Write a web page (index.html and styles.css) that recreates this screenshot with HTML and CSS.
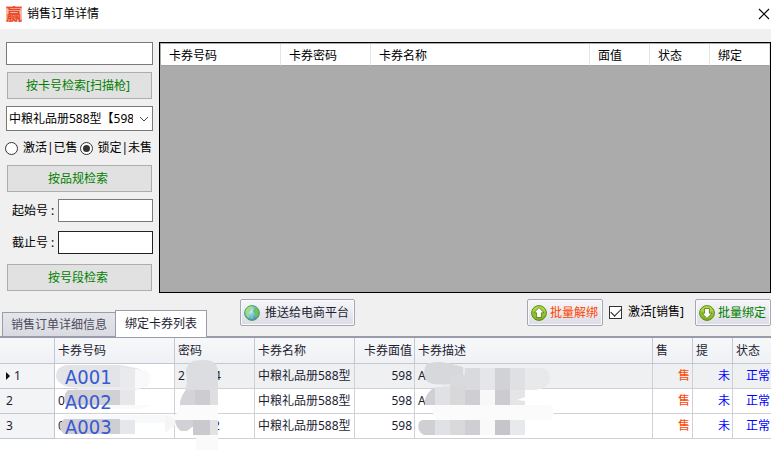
FILE: index.html
```
<!DOCTYPE html>
<html lang="zh-CN">
<head>
  <meta charset="UTF-8" />
  <meta name="viewport" content="width=device-width, initial-scale=1.0"/>
  <title>销售订单详情</title>
  <link rel="stylesheet" href="styles.css">
</head>
<body>
  <header class="title-bar">
    <span class="app-icon">赢</span>
    <h1>销售订单详情</h1>
    <button class="close-btn" aria-label="关闭">
      <svg width="12" height="12" viewBox="0 0 12 12"><path d="M1 1l10 10M11 1L1 11" stroke="#000" stroke-width="1.1"/></svg>
    </button>
  </header>

  <main class="workspace">
    <form class="search" onsubmit="return false">
      <input type="text" class="box" id="cardNo" aria-label="卡号">
      <button class="search-btn">按卡号检索[扫描枪]</button>
      <div class="combo">
        <select class="box" id="spec" aria-label="品规">
          <option>中粮礼品册588型【598</option>
        </select>
        <svg class="arrow" width="10" height="6" viewBox="0 0 10 6"><path d="M1 1l4 4 4-4" fill="none" stroke="#444"/></svg>
      </div>
      <div class="radios">
        <label><input type="radio" name="state"> 激活|已售</label>
        <label><input type="radio" name="state" checked> 锁定|未售</label>
      </div>
      <button class="search-btn">按品规检索</button>
      <div class="range">
        <label for="startNo">起始号 :</label>
        <input type="text" class="box" id="startNo">
        <label for="endNo">截止号 :</label>
        <input type="text" class="box active" id="endNo">
      </div>
      <button class="search-btn">按号段检索</button>
    </form>

    <section class="result">
      <table class="result-grid">
        <colgroup>
          <col class="w120"><col class="w90"><col><col class="w60"><col class="w60"><col class="w60">
        </colgroup>
        <thead>
          <tr><th>卡券号码</th><th>卡券密码</th><th>卡券名称</th><th>面值</th><th>状态</th><th>绑定</th></tr>
        </thead>
      </table>
    </section>
  </main>

  <div class="toolbar">
    <nav class="tabs">
      <button class="tab">销售订单详细信息</button>
      <button class="tab selected">绑定卡券列表</button>
    </nav>
    <button class="tool push">
      <svg width="16" height="16" viewBox="0 0 16 16">
        <defs>
          <radialGradient id="globe" cx=".4" cy=".35" r=".7"><stop offset="0" stop-color="#d3effc"/><stop offset=".6" stop-color="#66b2e2"/><stop offset="1" stop-color="#3a83bd"/></radialGradient>
          <linearGradient id="green" x1="0" y1="0" x2="0" y2="1"><stop offset="0" stop-color="#b8e052"/><stop offset="1" stop-color="#7aae1c"/></linearGradient>
        </defs>
        <circle cx="8" cy="8" r="7.4" fill="url(#globe)" stroke="#55a04c"/>
        <path d="M2 5c1-2 3-3.600 5.500-3.800l1.500 1-2 1.500.5 1.500-2 1.500L4 8l1.500 2-.5 3C2.500 11.500 1 8.500 2 5z" fill="#9be07e"/>
        <path d="M10 3l3 .5c1.500 2 2 4.500 1 7l-2 2-1.500-2 .5-2-2-1.500L9.500 5z" fill="#6cc258"/>
        <path d="M7 11l2 1-1 2-1.500-.5z" fill="#8cd870"/>
      </svg>
      推送给电商平台
    </button>
    <button class="tool unbind">
      <svg width="16" height="16" viewBox="0 0 16 16">
        <circle cx="8" cy="8" r="7.400" fill="url(#green)" stroke="#5c8a10"/>
        <path d="M8 2.500l5 5.300h-2.600V12.500H5.600V7.800H3z" fill="#fff" stroke="#4f7810" stroke-width=".8"/>
      </svg>
      批量解绑
    </button>
    <label class="check"><input type="checkbox" checked> 激活[销售]</label>
    <button class="tool bind">
      <svg width="16" height="16" viewBox="0 0 16 16">
        <circle cx="8" cy="8" r="7.400" fill="url(#green)" stroke="#5c8a10"/>
        <path d="M8 13.500l5-5.300h-2.600V3.500H5.600v4.700H3z" fill="#fff" stroke="#4f7810" stroke-width=".8"/>
      </svg>
      批量绑定
    </button>
  </div>

  <section class="panel">
    <table class="cards">
      <colgroup>
        <col class="w55"><col class="w120"><col class="w80"><col class="w100"><col class="w60"><col><col class="w40"><col class="w40"><col class="w38">
      </colgroup>
      <thead>
        <tr><th></th><th>卡券号码</th><th>密码</th><th>卡券名称</th><th class="num">卡券面值</th><th>卡券描述</th><th>售</th><th>提</th><th>状态</th></tr>
      </thead>
      <tbody>
        <tr class="current">
          <th><span class="pointer"></span>1</th>
          <td class="focused"><span class="mark">A001</span></td>
          <td>2<span class="tail">4</span></td>
          <td>中粮礼品册588型</td><td class="num">598</td><td>A</td>
          <td class="sold">售</td><td class="state">未</td><td class="state">正常</td>
        </tr>
        <tr>
          <th>2</th>
          <td>0<span class="mark">A002</span></td>
          <td></td>
          <td>中粮礼品册588型</td><td class="num">598</td><td>A</td>
          <td class="sold">售</td><td class="state">未</td><td class="state">正常</td>
        </tr>
        <tr>
          <th>3</th>
          <td>0<span class="mark">A003</span></td>
          <td class="hidden-code">2</td>
          <td>中粮礼品册588型</td><td class="num">598</td><td></td>
          <td class="sold">售</td><td class="state">未</td><td class="state">正常</td>
        </tr>
      </tbody>
    </table>

    <!-- masks over the card numbers, passwords and descriptions -->
    <svg class="masks" width="771" height="121" viewBox="0 338 771 121">
      <path d="M66 365h54l16 3 10 3q6 7 1 15l-12 4h-15l-52-3q-12-4-12-11 0-9 10-11z" fill="#e3e4e7"/>
      <path d="M120 367l15 2v20h-15z" fill="#e9eaec"/>
      <path d="M135 369l9 1q6 1 6 8t-7 10l-8 1z" fill="#f9f9fa"/>
      <path d="M80 387h55v4H72z" fill="#ececee"/>
      <path d="M68 390h52v15H66q-4-10 2-15z" fill="#d1d1d5"/>
      <path d="M120 390h15v15h-15z" fill="#e7e7e9"/>
      <path d="M66 405h87l-14 4H72z" fill="#fafafb"/>
      <path d="M64 415h112v8h-41v-3H62z" fill="#f8f9fa"/>
      <path d="M165 415l10 5 5 1-15 12z" fill="#f5f5f6"/>
      <path d="M64 419h56v15H64q-5-4-4-10z" fill="#cfcfd3"/>
      <path d="M120 420h15v14h-15z" fill="#e6e7ea"/>

      <path d="M193 361q11-2 18 0 7 3 7 11v33h-38q0-7 5-14 3-8 1-19 0-7 7-11z" fill="#dcdde0"/>
      <path d="M186 390h9v15h-15q0-7 6-15z" fill="#d4d4d8"/>
      <path d="M195 390h15v15h-15z" fill="#ccccd1"/>
      <path d="M210 390h8v15h-8z" fill="#dfdfe2"/>
      <path d="M180 405h38v15h-44z" fill="#fbfbfc"/>
      <path d="M175 420h20v5l-8 6h-6q-5-3-6-11z" fill="#d2d2d6"/>
      <path d="M193 420h17v15h-17z" fill="#cacace"/>
      <path d="M210 420h8v15h-8z" fill="#e2e2e5"/>
      <path d="M196 435h22v15h-22z" fill="#fafafb"/>

      <path d="M427 364q10-4 24 0l12 4h78q9 0 9 12-2 9-15 10H438l7-6-17-2q-6-8-1-18z" fill="#e8e9eb"/>
      <path d="M427 364q10-4 24 0l12 3v8l-13 1v8q-20 2-24-4-4-9 1-16z" fill="#d7d8db"/>
      <path d="M450 375h15v15h-15z" fill="#d9dadd"/>
      <path d="M465 368h15v22h-15z" fill="#d9dadd"/>
      <path d="M480 368h15v22h-15z" fill="#e5e6e9"/>
      <path d="M495 368h15v22h-15z" fill="#d1d2d5"/>
      <path d="M510 368h15v22h-15z" fill="#dfe0e3"/>
      <path d="M432 389h3v16h-10q-2-8 7-16z" fill="#cfcfd4"/>
      <path d="M435 387h15v18h-15z" fill="#e0e1e5"/>
      <path d="M450 385h15v20h-15z" fill="#d8d8db"/>
      <path d="M465 390h15v15h-15z" fill="#cfcfd3"/>
      <path d="M480 390h15v15h-15z" fill="#f8f8f9"/>
      <path d="M495 390h15v15h-15z" fill="#cbcbd0"/>
      <path d="M510 390h15v7l-8 3 8 1v4h-15z" fill="#e5e5e8"/>
      <path d="M430 405h120q4 0 4 7-1 8-8 8H436q-4-8-6-15z" fill="#fbfbfc"/>
      <path d="M422 420h13v15h-11q-8-4-5-13z" fill="#d0d0d4"/>
      <path d="M435 420h15v15h-15z" fill="#e0e1e5"/>
      <path d="M450 420h15v15h-15z" fill="#d9d9dc"/>
      <path d="M465 420h15v15h-15z" fill="#cfcfd3"/>
      <path d="M480 420h15v15h-15z" fill="#f9f9fa"/>
      <path d="M495 420h15v15h-15z" fill="#c5c5ca"/>
      <path d="M510 420h15v15h-15z" fill="#e8e9ed"/>
    </svg>
  </section>
</body>
</html>
```
FILE: styles.css
```
:root {
  --face: #f0f0f0;
  --btn: #e1e1e1;
  --btn-border: #adadad;
  --green: #008000;
  --grid-line: #d0d0d7;
  --head-line: #c5c6d0;
  --panel-line: #9b9cab;
  --ink: #1e1e32;
}

* {
  box-sizing: border-box;
}

body {
  margin: 0;
  min-height: 100vh;
  background: #fff;
  color: #000;
  font-family: "Noto Sans", "Noto Sans CJK SC", sans-serif;
  font-size: 12px;
  line-height: 16px;
}

button, input, select {
  font: inherit;
  color: inherit;
  margin: 0;
}

/* title bar */
.title-bar {
  display: flex;
  align-items: center;
  height: 29px;
  padding: 0 1px 2px 6px;
}

.app-icon {
  width: 16px;
  height: 16px;
  margin-right: 5px;
  background: #f9b9a6;
  color: #e8492a;
  font-size: 16px;
  font-weight: bold;
}

.title-bar h1 {
  margin: 0;
  font-size: 12px;
  font-weight: normal;
}

.close-btn {
  display: flex;
  margin-left: auto;
  padding: 0;
  border: none;
  background: none;
}

/* search form and result grid */
.workspace {
  display: flex;
  gap: 6px;
  padding: 13px 0 0 6px;
  background: var(--face);
}

.search {
  display: flex;
  flex-direction: column;
  flex: 0 0 147px;
  gap: 7px;
}

.box {
  width: 100%;
  height: 23px;
  padding: 0 2px;
  border: 1px solid #7a7a7a;
  border-radius: 0;
  background: #fff;
}

.box.active {
  border-color: #222;
}

.search-btn {
  height: 27px;
  margin: 0 1px;
  padding: 0 3px 0 0;
  border: 1px solid var(--btn-border);
  background: var(--btn);
  color: var(--green);
}

.combo {
  position: relative;
  display: flex;
}

.combo .box {
  height: 25px;
  padding-right: 19px;
  appearance: none;
}

.arrow {
  position: absolute;
  right: 4px;
  top: 10px;
  pointer-events: none;
}

.radios {
  display: flex;
  height: 20px;
  margin: 0 -1px;
}

.radios label {
  display: flex;
  flex: 1;
  align-items: center;
  gap: 5px;
  white-space: nowrap;
}

.radios input {
  display: grid;
  place-items: center;
  width: 13px;
  height: 13px;
  border: 1px solid #333;
  border-radius: 50%;
  background: #fff;
  appearance: none;
}

.radios input:checked::before {
  content: "";
  width: 7px;
  height: 7px;
  border-radius: 50%;
  background: #333;
}

.range {
  display: grid;
  grid-template-columns: 46px 1fr;
  align-items: center;
  row-gap: 9px;
  padding: 0 0 3px 6px;
}

.result {
  flex: 1;
  min-height: 251px;
  padding: 1px 0 0 1px;
  border: 1px solid #000;
  background: #ababab;
}

.result-grid, .cards {
  width: 100%;
  border-collapse: separate;
  border-spacing: 0;
  table-layout: fixed;
}

.result-grid th {
  height: 22px;
  padding: 2px 8px 0;
  border-right: 1px solid #e5e5e5;
  border-bottom: 1px solid #a0a0a0;
  background: #fff;
  font-weight: normal;
  text-align: left;
}

.w38 { width: 38px; }
.w40 { width: 40px; }
.w55 { width: 55px; }
.w60 { width: 60px; }
.w80 { width: 80px; }
.w90 { width: 90px; }
.w100 { width: 100px; }
.w120 { width: 120px; }

/* tabs and batch buttons */
.toolbar {
  display: flex;
  align-items: flex-start;
  height: 43px;
  padding: 6px 0 0 2px;
  background: var(--face);
}

.tabs {
  display: flex;
  align-items: flex-end;
  align-self: flex-end;
  margin-right: 33px;
}

.tab {
  height: 24px;
  padding: 0 8px;
  border: 1px solid var(--panel-line);
  border-width: 1px 0 0 1px;
  background: linear-gradient(#e4e5ea, #dadbe2);
  color: #4b4b5c;
}

.tab.selected {
  position: relative;
  z-index: 1;
  height: 27px;
  margin-bottom: -1px;
  padding: 0 9px;
  border-width: 1px 1px 0;
  background: #fff;
  color: var(--ink);
}

.tool {
  display: flex;
  align-items: center;
  gap: 3px;
  height: 27px;
  padding: 0 4px 0 3px;
  border: 1px solid #a5a7b5;
  border-radius: 2px;
  background: linear-gradient(#f6f6f9, #dcdde5);
  box-shadow: inset 0 0 0 1px #fafafc;
  color: var(--ink);
  white-space: nowrap;
}

.tool.push {
  gap: 5px;
  padding-right: 5px;
}

.tool.unbind {
  margin-left: auto;
  color: #ff4500;
}

.tool.bind {
  color: var(--green);
}

.check {
  display: flex;
  align-items: center;
  gap: 6px;
  height: 26px;
  margin: 0 11px 0 6px;
  white-space: nowrap;
}

.check input {
  display: grid;
  place-items: center;
  width: 13px;
  height: 13px;
  border: 1px solid #333;
  background: #fff;
  appearance: none;
}

.check input:checked::before {
  content: "";
  width: 9px;
  height: 5px;
  margin-bottom: 3px;
  border: solid #222;
  border-width: 0 0 1px 1px;
  transform: rotate(-45deg);
}

/* bound cards */
.panel {
  position: relative;
  border-top: 2px solid var(--panel-line);
  color: var(--ink);
}

.cards th, .cards td {
  height: 25px;
  padding: 0 2px 0 3px;
  border-right: 1px solid var(--grid-line);
  border-bottom: 1px solid var(--grid-line);
  font-weight: normal;
  text-align: left;
  white-space: nowrap;
}

.cards th:last-child, .cards td:last-child {
  border-right: none;
  padding-right: 1px;
}

.cards thead th {
  height: 26px;
  border-color: var(--head-line);
  background: linear-gradient(#f7f8fa, #f0f1f4);
}

.cards tbody th {
  padding-left: 6px;
  border-color: var(--head-line);
  background: #f3f4f6;
}

.cards td {
  position: relative;
}

.current td {
  background: #eff0f2;
}

.current td.focused {
  background: #fff;
}

.pointer {
  display: inline-block;
  margin-right: 4px;
  border: 4px solid transparent;
  border-left-color: #111;
  border-right: none;
}

.cards .num, .cards .sold, .cards .state {
  text-align: right;
}

.cards .sold {
  color: #ff4500;
}

.cards .state {
  color: #00f;
}

.tail {
  margin-left: 29px;
}

.cards .hidden-code {
  padding-left: 38px;
}

.mark {
  position: absolute;
  left: 10px;
  top: 1px;
  z-index: 2;
  color: #3959d2;
  font-family: "DejaVu Sans Condensed", "Noto Sans", sans-serif;
  font-size: 20px;
  line-height: 24px;
}

.masks {
  position: absolute;
  left: 0;
  top: 0;
  z-index: 1;
  max-width: 100%;
  pointer-events: none;
}
```
